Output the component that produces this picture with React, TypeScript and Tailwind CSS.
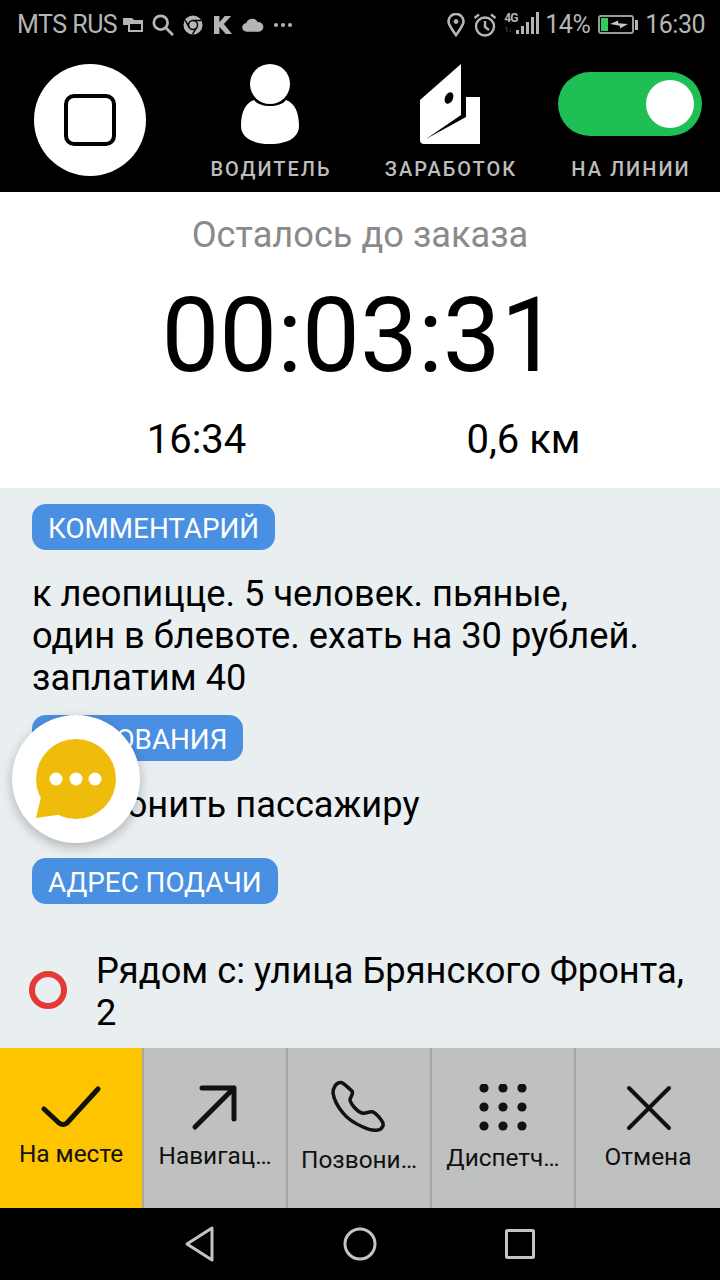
const Check = () => (
  <svg width="60" height="48" viewBox="0 0 60 48" fill="none" stroke="#111" strokeWidth="5" strokeLinecap="round" strokeLinejoin="round">
    <path d="M3 29 L18 43 Q22 46 26 43 L57 9" />
  </svg>
);

const ArrowUp = () => (
  <svg width="48" height="48" viewBox="0 0 48 48" fill="none" stroke="#111" strokeWidth="5" strokeLinecap="round" strokeLinejoin="round">
    <path d="M4 43 L43 4 M11 4 H43 V35" />
  </svg>
);

const Phone = () => (
  <svg width="56" height="56" viewBox="0 0 56 56" fill="none" stroke="#111" strokeWidth="3.5" strokeLinejoin="round">
    <path d="M9 2.5 C12 2 14 5 21 11 C23 14 19 17 19 20 C20 25 27 32 31 33 C35 34 38 31 42 32 C45 33 50 39 52 43 C53 46 50 50 47 50 C41 51 36 49 32 47 C25 44 16 38 12 33 C7 27 3 20 2 13 C2 8 5 3 9 2.5 Z" />
  </svg>
);

const Dots = () => (
  <svg width="48" height="48" viewBox="0 0 48 48" fill="#111">
    {[4, 23, 42].map((y) =>
      [5, 24, 43].map((x) => <circle key={`${x}-${y}`} cx={x} cy={y} r="4.6" />)
    )}
  </svg>
);

const Cross = () => (
  <svg width="48" height="48" viewBox="0 0 48 48" fill="none" stroke="#111" strokeWidth="4" strokeLinecap="round">
    <path d="M5 4 L45 44 M45 4 L5 44" />
  </svg>
);

const tabs = [
  { label: "На месте", icon: <Check />, active: true, text: "mt-[12px]" },
  { label: "Навигац…", icon: <ArrowUp />, active: false, text: "mt-[10px]" },
  { label: "Позвони…", icon: <Phone />, active: false, text: "mt-[14px]" },
  { label: "Диспетч…", icon: <Dots />, active: false, text: "mt-[12px]" },
  { label: "Отмена", icon: <Cross />, active: false, text: "mt-[11px]" },
];

const StatusBar = () => (
  <div className="h-12 flex items-center justify-between pl-[17px] pr-[15px] pt-[1px] text-[#b5b5b5] text-[25px] tracking-[-0.5px]">
    <div className="flex items-center">
      <span>MTS RUS</span>
      <svg className="ml-[6px]" width="20" height="14" viewBox="0 0 20 14" fill="#b5b5b5">
        <path d="M0 0 H9 L11 2 H20 V14 H5 V7 H0 Z M7 6 V12 H18 V6 Z" fillRule="evenodd" />
      </svg>
      <svg className="ml-[9px]" width="22" height="22" viewBox="0 0 24 24" fill="none" stroke="#b5b5b5" strokeWidth="3">
        <circle cx="9.5" cy="9.5" r="7.5" />
        <path d="M15 15 L22 22" strokeLinecap="round" />
      </svg>
      <svg className="ml-[9px]" width="20" height="20" viewBox="0 0 22 22">
        <circle cx="11" cy="11" r="10.5" fill="#b5b5b5" />
        <circle cx="11" cy="11" r="5" fill="#b5b5b5" stroke="#000" strokeWidth="1.6" />
        <path d="M11 6 H20 M7 14 L2.5 6 M15 14 L10.5 21" stroke="#000" strokeWidth="1.6" />
      </svg>
      <svg className="ml-[11px]" width="18" height="20" viewBox="0 0 20 22" fill="#b5b5b5">
        <path d="M0 1 H6 V8 L12 1 H19 L11 10 L20 21 H13 L6 13 V21 H0 Z" />
      </svg>
      <svg className="ml-[10px]" width="22" height="14" viewBox="0 0 23 14" fill="#b5b5b5">
        <path d="M5 14 A4.5 4.5 0 0 1 4.5 5 A6.5 6.5 0 0 1 16.5 4 A5 5 0 0 1 18 14 Z" />
      </svg>
      <div className="ml-[10px] flex gap-[3px]">
        <span className="w-[4px] h-[4px] rounded-full bg-[#b5b5b5]" />
        <span className="w-[4px] h-[4px] rounded-full bg-[#b5b5b5]" />
        <span className="w-[4px] h-[4px] rounded-full bg-[#b5b5b5]" />
      </div>
    </div>
    <div className="flex items-center">
      <svg width="18" height="24" viewBox="0 0 18 24" fill="none" stroke="#b5b5b5" strokeWidth="2.6">
        <path d="M9 22 C4 15 1.5 12 1.5 8.5 A7.5 7.5 0 0 1 16.5 8.5 C16.5 12 14 15 9 22 Z" />
        <circle cx="9" cy="8.5" r="2" fill="#b5b5b5" strokeWidth="1" />
      </svg>
      <svg className="ml-[8px]" width="24" height="24" viewBox="0 0 24 24" fill="none" stroke="#b5b5b5" strokeWidth="2.4">
        <circle cx="12" cy="13.5" r="9" />
        <path d="M12 8 V14 L16 17 M1.5 5 L6 1.5 M22.5 5 L18 1.5" />
      </svg>
      <div className="ml-[7px] mb-[3px] relative w-[35px] h-[22px]">
        <span className="absolute left-0 top-[0px] text-[12px] leading-[12px] font-bold tracking-[-1px]">4G</span>
        <span className="absolute left-0 top-[14px] text-[8px] leading-[8px] text-[#555]">1↓</span>
        <div className="absolute right-0 bottom-0 flex items-end gap-[2px]">
          <span className="w-[3px] h-[4px] bg-[#b5b5b5]" />
          <span className="w-[3px] h-[8px] bg-[#b5b5b5]" />
          <span className="w-[3px] h-[12px] bg-[#b5b5b5]" />
          <span className="w-[3px] h-[17px] bg-[#b5b5b5]" />
          <span className="w-[3px] h-[22px] bg-[#b5b5b5]" />
        </div>
      </div>
      <span className="ml-[6px]">14%</span>
      <div className="ml-[8px] flex items-center">
        <div className="relative w-[36px] h-[19px] border-2 border-[#9a9a9a] rounded-[3px]">
          <div className="absolute left-[1px] top-[1px] bottom-[1px] w-[7px] bg-[#2ecc5a]" />
          <svg className="absolute left-[10px] top-[2px]" width="18" height="11" viewBox="0 0 20 11" fill="#c8c8c8">
            <path d="M0 5 L9 1 V4 L20 5 L11 10 V7 Z" />
          </svg>
        </div>
        <span className="ml-[1px] w-[3px] h-[10px] bg-[#b5b5b5]" />
      </div>
      <span className="ml-[7px]">16:30</span>
    </div>
  </div>
);

const TopBar = () => (
  <div className="bg-black">
    <StatusBar />
    <div className="h-36 grid grid-cols-4">
      <div className="flex justify-center pt-[16px]">
        <div className="w-[112px] h-[112px] rounded-full bg-white flex items-center justify-center">
          <div className="w-[52px] h-[52px] rounded-[10px] border-[4px] border-black" />
        </div>
      </div>
      <div className="flex flex-col items-center pt-[16px]">
        <svg width="60" height="80" viewBox="0 0 60 80" fill="#fff">
          <circle cx="30" cy="20" r="20" />
          <path d="M14 36 C20 44 40 44 46 36 C54 39 59 47 59 62 C59 72 50 80 30 80 C10 80 1 72 1 62 C1 47 6 39 14 36 Z" />
        </svg>
        <span className="mt-[13px] pl-[2px] text-[20px] leading-[24px] font-medium tracking-[2px] text-[#bdbdbd]">ВОДИТЕЛЬ</span>
      </div>
      <div className="flex flex-col items-center pt-[16px]">
        <svg width="60" height="80" viewBox="0 0 60 80" fill="#fff">
          <path d="M41 0 V33 H60 V80 H4 Q0 80 0 76 V36 Z" />
          <path d="M41 33 H46 V53 L6 75 L41 51 Z" fill="#000" />
          <ellipse cx="29" cy="34" rx="4" ry="6" transform="rotate(25 29 34)" fill="#000" />
        </svg>
        <span className="mt-[13px] pl-[2px] text-[20px] leading-[24px] font-medium tracking-[2px] text-[#bdbdbd]">ЗАРАБОТОК</span>
      </div>
      <div className="flex flex-col items-center">
        <div className="mt-[24px] w-[144px] h-[64px] rounded-full bg-[#1fbf55] flex items-center justify-end pr-[8px]">
          <div className="w-[48px] h-[48px] rounded-full bg-white" />
        </div>
        <span className="mt-[21px] pl-[2px] text-[20px] leading-[24px] font-medium tracking-[2px] text-[#bdbdbd]">НА ЛИНИИ</span>
      </div>
    </div>
  </div>
);

const Timer = () => (
  <div className="h-[296px] bg-white flex flex-col items-center">
    <div className="mt-[23px] text-[36.2px] leading-[40px] text-[#8a8a8a]">Осталось до заказа</div>
    <div className="mt-[20px] text-[103px] leading-[122px] text-black">00:03:31</div>
    <div className="mt-[20px] w-full grid grid-cols-2 text-[40px] leading-[46px] text-black">
      <span className="text-center pl-[33px]">16:34</span>
      <span className="text-center pr-[33px]">0,6 км</span>
    </div>
  </div>
);

const Badge = ({ children }: { children: string }) => (
  <div className="w-fit h-[46px] px-[16px] pt-[2px] rounded-[14px] bg-[#4a90e2] text-white text-[27.8px] leading-[46px]">{children}</div>
);

const Details = () => (
  <div className="relative h-[560px] bg-[#e9eef0] pt-[16px] text-black text-[36.25px] leading-[42px]">
    <div className="px-[32px]">
      <Badge>КОММЕНТАРИЙ</Badge>
      <p className="mt-[23px]">
        к леопицце. 5 человек. пьяные,<br />
        один в блевоте. ехать на 30 рублей.<br />
        заплатим 40
      </p>
      <div className="mt-[16px]">
        <Badge>ТРЕБОВАНИЯ</Badge>
      </div>
      <p className="mt-[23px] pl-[9px]">Позвонить пассажиру</p>
      <div className="mt-[32px]">
        <Badge>АДРЕС ПОДАЧИ</Badge>
      </div>
    </div>
    <div className="mt-[46px] pl-[29px] pr-[30px] flex items-center">
      <div className="w-[38px] h-[38px] mb-[4px] shrink-0 rounded-full border-[6.5px] border-[#e53935]" />
      <p className="ml-[29px]">Рядом с: улица Брянского Фронта, 2</p>
    </div>
    <div className="absolute left-[12px] top-[227px] w-[128px] h-[128px] rounded-full bg-white shadow-[0_4px_12px_rgba(0,0,0,0.25)] flex items-center justify-center">
      <svg width="80" height="80" viewBox="0 0 80 80" fill="#f0bc0c">
        <circle cx="40" cy="40" r="40" />
        <path d="M5 58 L0 79 L21 76 L40 70 Z" />
        <circle cx="20" cy="40" r="6.5" fill="#fff" />
        <circle cx="40" cy="40" r="6.5" fill="#fff" />
        <circle cx="59" cy="40" r="6.5" fill="#fff" />
      </svg>
    </div>
  </div>
);

const TabBar = () => (
  <div className="h-40 grid grid-cols-5">
    {tabs.map((t) => (
      <div
        key={t.label}
        className={
          t.active
            ? "bg-[#ffc400] border-r-2 border-[#a5a7a7] flex flex-col items-center pt-[32px] text-[#111] text-[24.4px] leading-[28px]"
            : "bg-[#bfc0c0] border-r-2 border-[#a5a7a7] last:border-r-0 flex flex-col items-center pt-[36px] text-[#111] text-[24.4px] leading-[28px]"
        }
      >
        <div className="h-[48px] flex items-center justify-center">{t.icon}</div>
        <span className={t.text}>{t.label}</span>
      </div>
    ))}
  </div>
);

const NavBar = () => (
  <div className="h-[72px] bg-black flex items-center justify-center">
    <div className="w-40 flex justify-center">
      <svg width="32" height="36" viewBox="0 0 32 36" fill="none" stroke="#c4c4c4" strokeWidth="3" strokeLinejoin="round">
        <path d="M28 2 V34 L3 18 Z" />
      </svg>
    </div>
    <div className="w-40 flex justify-center">
      <svg width="34" height="34" viewBox="0 0 34 34" fill="none" stroke="#c4c4c4" strokeWidth="3">
        <circle cx="17" cy="17" r="15" />
      </svg>
    </div>
    <div className="w-40 flex justify-center">
      <svg width="30" height="30" viewBox="0 0 30 30" fill="none" stroke="#c4c4c4" strokeWidth="3" strokeLinejoin="round">
        <rect x="1.5" y="1.5" width="27" height="27" rx="1" />
      </svg>
    </div>
  </div>
);

export default function App() {
  return (
    <div className="w-[720px] h-[1280px] overflow-hidden font-['Roboto',sans-serif]">
      <TopBar />
      <Timer />
      <Details />
      <TabBar />
      <NavBar />
    </div>
  );
}
